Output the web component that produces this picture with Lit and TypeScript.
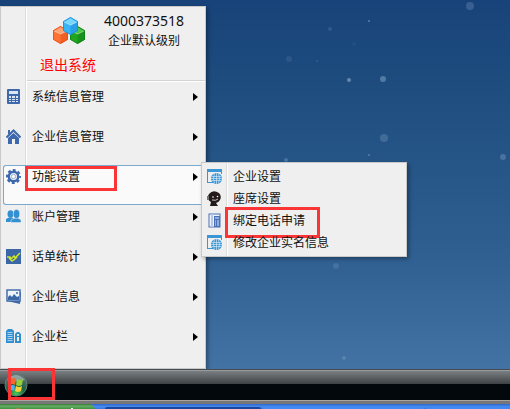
import { LitElement, html, css, svg } from "lit";
import { customElement, property } from "lit/decorators.js";

const icons: Record<string, unknown> = {
  calculator: svg`<rect x="1" y="0" width="13" height="15" rx="1" fill="#3d68ad"/><rect x="3" y="2" width="9" height="3" fill="#dbe6f5"/>
    <path d="M3 7h2v2H3zM6 7h3v2H6zM10 7h2v2h-2zM3 10h2v1H3zM6 10h3v1H6zM10 10h2v1h-2zM3 12h2v1H3zM6 12h3v1H6zM10 12h2v1h-2z" fill="#dbe6f5"/>`,
  home: svg`<path d="M2 1h2v4H2z" fill="#3d68ad"/><path d="M0.500 8.500 7.500 1.500l7 7" fill="none" stroke="#3d68ad" stroke-width="2"/><path d="M2 9l5.500-5L13 9v6H9v-5H6v5H2z" fill="#3d68ad"/>`,
  gear: svg`<g fill="none" stroke="#3d68ad"><circle cx="7.5" cy="7.5" r="6.500" stroke-width="2" stroke-dasharray="2.900 2.200" stroke-dashoffset="1.45"/><circle cx="7.5" cy="7.5" r="4.700" stroke-width="2.400"/><circle cx="7.5" cy="7.5" r="2.200" stroke-width=".8" stroke="#7d9fd0"/></g>`,
  users: svg`<g fill="#3390d0"><ellipse cx="4.5" cy="5" rx="3" ry="3.8"/><path d="M0 13V10l3-1.500h3l2 1.500v3z"/><g stroke="#eee" stroke-width=".5"><path d="M5 13.500v-2.500l4-2h3l3 2v2.500z"/><ellipse cx="10.500" cy="5" rx="3.200" ry="4.400"/></g></g>`,
  chart: svg`<rect width="15" height="15" fill="#3b67a6"/><path d="M1 8l3 0 1 2 3-3 1 2 5-5M3 9l3 3 3-2 2-2" fill="none" stroke="#cfe52c" stroke-width="1.500"/>`,
  photo: svg`<path d="M1 12l13 3 1-12z" fill="#3b67a6"/><rect x="1" y="1" width="13" height="11" fill="#eef4fb" stroke="#3b67a6" stroke-width="1.400"/><path d="M2 11V8l2-2 2 2 2-3 3 3 2-1v4z" fill="#3b67a6"/><circle cx="11" cy="4" r="1" fill="#3b67a6"/>`,
  building: svg`<path d="M0 2l2-2h4l2 2v12H0z" fill="#3390d0"/><path d="M1.500 3.500h5M1.500 5.500h5M1.500 7.500h5M1.500 9.500h5M1.500 11.500h5" stroke="#cfe3f2" stroke-width=".8"/><path d="M9 14V5l2-2h2l2 2v9z" fill="#3390d0"/><path d="M11 5h2v2h-2zM11 8h2v4h-2z" fill="#eee"/>`,
  web: svg`<path d="M0 0h15v5h-1V3H1v10h5v1H0z" fill="#3b96d6"/><circle cx="9.500" cy="9.500" r="5.500" fill="#3b96d6"/><path d="M4.500 7.500h10M4 9.500h11M4.500 11.500h10M9.500 4v11M7.500 4.500q-2 5 0 10M11.500 4.500q2 5 0 10" fill="none" stroke="#e4f0f9" stroke-width=".6"/>`,
  agent: svg`<path d="M2 3Q6-2 12 2q3 3 1 7-2 3-4 3l2 3H3l1-4Q0 9 1 5z" fill="#221a1b"/><path d="M0 5h2v4H0z" fill="#777"/><circle cx="6" cy="6" r=".8" fill="#fff"/><circle cx="10.500" cy="5.500" r=".8" fill="#fff"/><path d="M5 9q4 1 6-1" fill="none" stroke="#d8d0d0" stroke-width=".9"/>`,
  phone: svg`<rect x="2" y="1" width="11" height="13" fill="#eef3fb" stroke="#4a70b8"/><path d="M4 1h2v13H4z" fill="#b5c7e6"/><path d="M7 3h6v11H7z" fill="#4a70b8"/><path d="M8 5h4M8 8h1M10 8h2M8 10h1M10 10h2M8 12h1M10 12h2" stroke="#dce7f7"/>`,
};

interface Entry { icon: string; label: string; active?: boolean; marked?: boolean; }

const entries: Entry[] = [
  { icon: "calculator", label: "系统信息管理" },
  { icon: "home", label: "企业信息管理" },
  { icon: "gear", label: "功能设置", active: true, marked: true },
  { icon: "users", label: "账户管理" },
  { icon: "chart", label: "话单统计" },
  { icon: "photo", label: "企业信息" },
  { icon: "building", label: "企业栏" },
];

const subEntries: Entry[] = [
  { icon: "web", label: "企业设置" },
  { icon: "agent", label: "座席设置" },
  { icon: "phone", label: "绑定电话申请", marked: true },
  { icon: "web", label: "修改企业实名信息" },
];

// x, y, radius, opacity
const flakes = [
  [470, 6, 4, 0.2], [369, 21, 1, 0.4], [330, 29, 2, 0.15], [289, 59, 3, 0.1], [349, 80, 2, 0.45],
  [383, 79, 3, 0.35], [384, 138, 4, 0.2], [369, 155, 1, 0.35], [503, 157, 3, 0.25], [336, 266, 3, 0.15],
  [344, 358, 2, 0.2], [317, 61, 1, 0.15], [354, 44, 2, 0.05], [286, 160, 2, 0.25],
];

@customElement("menu-icon")
export class MenuIcon extends LitElement {
  static styles = css`
    :host { display: block; width: 15px; height: 15px; }
    svg { display: block; }
  `;
  @property() name = "";
  render() {
    return html`<svg width="15" height="15" viewBox="0 0 15 15" aria-hidden="true">${icons[this.name]}</svg>`;
  }
}

@customElement("app-root")
export class AppRoot extends LitElement {
  static styles = css`
    :host {
      display: flex;
      flex-direction: column;
      min-height: 100vh;
      overflow: hidden;
      font: 12px/16px "Noto Sans", "Noto Sans CJK SC", sans-serif;
      color: #111;
      background: #18457a;
    }
    * { box-sizing: border-box; }
    button { margin: 0; border: 0; background: none; font: inherit; color: inherit; text-align: left; }
    .desktop {
      position: relative;
      flex: 1;
      display: flex;
      align-items: flex-end;
      padding-top: 6px;
      background: linear-gradient(#18437a, #1d4b7e 20%, #255486 43%, #306092 70%, #4273a4);
    }
    .snow { position: absolute; inset: 0; width: 100%; height: 100%; }
    .menu {
      position: relative;
      width: 206px;
      border: 1px solid #c9c9c9;
      background: linear-gradient(90deg, transparent 24px, #dcdcdc 24px, #dcdcdc 25px, #fff 25px, #fff 26px, transparent 26px) #efefef;
      box-shadow: 2px 2px 4px #0005;
    }
    .profile {
      display: grid;
      grid-template-columns: 48px 80px;
      justify-content: start;
      align-content: start;
      padding: 4px 0 0 44px;
      height: 73px;
      column-gap: 11px;
    }
    .logo { grid-row: 1 / 3; margin: 6px 0 0 8px; }
    .number { font-size: 14px; line-height: 20px; }
    .level { line-height: 20px; padding-left: 4px; }
    .logout { grid-column: 1 / 3; justify-self: start; margin: 4px 0 0 -5px; padding: 0; color: #f00; font-size: 14px; line-height: 20px; }
    .rule { height: 2px; margin-left: 26px; border-top: 1px solid #d2d2d2; background: #fff; }
    ul { margin: 0; padding: 0; list-style: none; }
    .main-list { padding: 3px 0; }
    .main-list > li { position: relative; height: 40px; }
    .entry {
      position: relative;
      display: flex;
      align-items: flex-start;
      gap: 11px;
      width: 100%;
      height: 40px;
      padding: 4px 7px 0 5px;
    }
    .active {
      border: 1px solid #7da9cd;
      border-right: 0;
      border-radius: 3px 0 0 3px;
      margin-left: 2px;
      width: calc(100% - 2px);
      padding: 3px 7px 0 2px;
      background: #fafafa;
    }
    .arrow { margin: 4px 0 0 auto; border: 4px solid transparent; border-left: 5px solid #000; border-right: 0; }
    .submenu {
      position: absolute;
      left: 200px;
      top: -3px;
      z-index: 2;
      padding: 3px 0 2px;
    }
    .submenu .entry { height: 22px; padding: 3px 5px; }
    .submenu li { position: relative; }
    .mark { position: absolute; border: 3px solid #fb3535; pointer-events: none; }
    .main-mark { left: 24px; top: 1px; width: 92px; height: 25px; }
    .sub-mark { left: 23px; top: -3px; width: 95px; height: 31px; }
    .taskbar {
      position: relative;
      height: 31px;
      border-top: 1px solid #444b52;
      background: linear-gradient(#9a9a9a 1px, #797f83 1px, #3e4244 14px, #03080d 14px);
    }
    .orb { display: block; padding: 3px 0 0 4px; }
    .orb svg { display: block; }
    .orb-mark { left: 8px; top: -2px; width: 47px; height: 32px; }
    .host-bar {
      display: flex;
      height: 10px;
      overflow: hidden;
      border-top: 1px solid #aaa4a1;
      background: linear-gradient(#777 3px, #2d66ce 3px, #4891f4 6px, #3a7be2 7px);
    }
    .host-start {
      width: 95px;
      height: 6px;
      margin-top: 3px;
      padding: 0;
      border-radius: 0 6px 0 0;
      background: linear-gradient(#357b35, #67ad65 2px, #3e933e 5px);
    }
    .host-start svg { display: block; }
    .host-tasks { flex: 1; display: grid; grid-template-columns: 39fr 40fr 21fr; gap: 2px; padding: 6px 0 0 10px; }
    .tab { background: #4389f5; border-radius: 2px 2px 0 0; }
    .tab.current { background: #1c459c; }
  `;

  private row(e: Entry, main: boolean): unknown {
    return html`<li>
      <button class="entry ${e.active ? "active" : ""}">
        <menu-icon name=${e.icon}></menu-icon>
        <span>${e.label}</span>
        ${main ? html`<i class="arrow"></i>` : ""}
      </button>
      ${e.marked ? html`<div class="mark ${main ? "main-mark" : "sub-mark"}"></div>` : ""}
      ${e.active ? html`<ul class="menu submenu">${subEntries.map((s) => this.row(s, false))}</ul>` : ""}
    </li>`;
  }

  private cube(x: number, y: number, base: string, light: string, dark: string) {
    return svg`<g transform="translate(${x} ${y})">
      <path d="M7.500 0l7.500 4.500v9L7.500 18 0 13.500v-9z" fill=${base}/>
      <path d="M7.500 1l6.500 4-6.500 3L1 5z" fill=${light}/>
      <path d="M7.500 9l7.500-4.500v9L7.500 18z" fill=${dark} opacity=".45"/>
      <path d="M1 5l6.500 3L14 5" fill="none" stroke="#fff" stroke-opacity=".4"/>
      <path d="M7.500 .5l7 4v9l-7 4-7-4v-9z" fill="none" stroke=${dark} stroke-width=".7"/>
    </g>`;
  }

  render() {
    return html`
      <main class="desktop">
        <svg class="snow" aria-hidden="true">
          ${flakes.map(([x, y, r, o]) => svg`<circle cx=${x} cy=${y} r=${r} fill="#b8d0e8" opacity=${o}/>`)}
        </svg>
        <nav class="menu">
          <div class="profile">
            <svg class="logo" width="33" height="28" viewBox="0 0 33 28" aria-hidden="true">
              ${this.cube(0, 9, "#ff7135", "#ffa274", "#dd4b12")}
              ${this.cube(17, 9, "#22a522", "#4fc54a", "#0c7c14")}
              ${this.cube(10, 0, "#38b5f5", "#78d6ff", "#1686d5")}
            </svg>
            <span class="number">4000373518</span>
            <span class="level">企业默认级别</span>
            <button class="logout">退出系统</button>
          </div>
          <div class="rule"></div>
          <ul class="main-list">${entries.map((e) => this.row(e, true))}</ul>
        </nav>
      </main>
      <footer>
        <div class="taskbar">
          <button class="orb" aria-label="Start">
            <svg width="24" height="24" viewBox="0 0 24 24" aria-hidden="true">
              <defs><radialGradient id="ball" cy=".9" r=".8"><stop offset="0" stop-color="#49c855"/><stop offset=".5" stop-color="#1b6340"/><stop offset="1" stop-color="#5b7070"/></radialGradient></defs>
              <circle cx="12" cy="12" r="11" fill="url(#ball)" stroke="#5f7d75"/>
              <path d="M3 7q9-10 18 0-9 3-18 0z" fill="#fff" opacity=".35"/>
              <path d="M7 6q3-2 5 0l-1 6q-3-2-5 0z" fill="#f3682c"/><path d="M13 6q3 2 6 0l-1 6q-3 2-6 0z" fill="#98cc3a"/>
              <path d="M6 13q3-2 5 0l-1 5q-3-2-5 0z" fill="#4bb3ef"/><path d="M12 13q3 2 6 0l-1 5q-3 2-6 0z" fill="#ffd13b"/>
            </svg>
          </button>
          <div class="mark orb-mark"></div>
        </div>
        <div class="host-bar">
          <button class="host-start" aria-label="Host start">
            <svg width="95" height="6" viewBox="0 0 95 6" aria-hidden="true">
              <path d="M14 6q3-3 7-1v1z" fill="#e8703a"/>
              <path d="M62 5h2v1h-2zM71 4h2v2h-2z" fill="#fff"/>
            </svg>
          </button>
          <div class="host-tasks"><span class="tab current"></span><span class="tab"></span><span class="tab"></span></div>
        </div>
      </footer>`;
  }
}
